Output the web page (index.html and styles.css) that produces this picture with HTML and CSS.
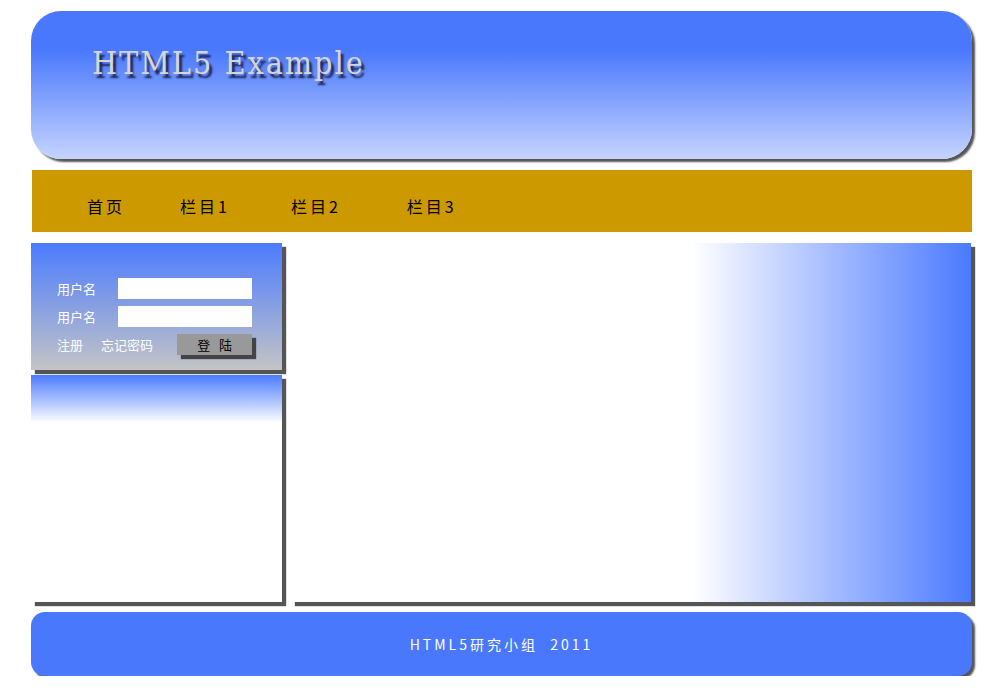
FILE: index.html
```html
<!DOCTYPE html>
<html lang="zh">
<head>
<meta charset="utf-8">
<title>HTML5 Example</title>
<link rel="stylesheet" href="styles.css">
</head>
<body>
<div class="page">
  <header class="header">
    <h1 class="title">HTML5 Example</h1>
  </header>
  <nav class="nav">
    <a class="nav-item">首页</a>
    <a class="nav-item">栏目1</a>
    <a class="nav-item">栏目2</a>
    <a class="nav-item">栏目3</a>
  </nav>
  <div class="content">
    <aside class="side">
      <form class="login">
        <div class="row"><label class="label">用户名</label><input class="field" type="text"></div>
        <div class="row"><label class="label">用户名</label><input class="field" type="password"></div>
        <div class="row links"><span class="link">注册</span><span class="link">忘记密码</span><button class="btn" type="button">登&nbsp;&nbsp;&nbsp;陆</button></div>
      </form>
      <div class="side-box"></div>
    </aside>
    <main class="main"></main>
  </div>
  <footer class="footer">HTML5研究小组&nbsp;&nbsp;2011</footer>
</div>
</body>
</html>
```
FILE: styles.css
```css
html, body {
  margin: 0;
  padding: 0;
  background: #fff;
}
.page {
  width: 941px;
  padding: 11px 0 0 31px;
  font-family: "Noto Sans CJK SC", "Liberation Sans", sans-serif;
}
.header {
  height: 148px;
  border-radius: 30px;
  background: linear-gradient(#4a78fd 26%, #c6d4fe);
  box-shadow: 3px 3px 2px #555;
  display: flex;
  align-items: flex-start;
}
.title {
  margin: 32px 0 0 61px;
  font-family: "DejaVu Serif Condensed", "DejaVu Serif", serif;
  font-stretch: condensed;
  font-weight: normal;
  font-size: 32px;
  letter-spacing: 2px;
  line-height: 40px;
  color: #d6d6d6;
  text-shadow: 3px 4px 2px #1a2550;
}
.nav {
  margin: 11px 0 0 1px;
  height: 62px;
  box-sizing: border-box;
  padding: 9px 0 0 55px;
  background: #cc9900;
  display: flex;
  align-items: center;
}
.nav-item {
  font-family: "Noto Sans CJK SC", serif;
  font-size: 16px;
  letter-spacing: 3px;
  color: #000;
  line-height: 20px;
}
.nav-item:nth-child(2) {
  margin-left: 55px;
}
.nav-item:nth-child(3) {
  margin-left: 61px;
}
.nav-item:nth-child(4) {
  margin-left: 66px;
}
.content {
  margin-top: 11px;
  height: 359px;
  display: flex;
  gap: 9px;
}
.side {
  width: 251px;
  display: flex;
  flex-direction: column;
  gap: 5px;
}
.login {
  margin: 0;
  height: 127px;
  box-sizing: border-box;
  padding: 35px 0 0 26px;
  background: linear-gradient(#4b7bff, #c4c4c6);
  box-shadow: 4px 4px 1px #555;
  display: flex;
  flex-direction: column;
  gap: 7px;
}
.row {
  display: flex;
  align-items: center;
  height: 21px;
}
.label {
  width: 61px;
  font-size: 13px;
  color: #fff;
}
.field {
  width: 134px;
  height: 21px;
  box-sizing: border-box;
  border: 0;
  margin: 0;
  padding: 0 2px;
  background: #fff;
}
.link {
  font-size: 13px;
  color: #fff;
  margin-right: 18px;
  white-space: nowrap;
}
.link + .link {
  margin-right: 24px;
}
.btn {
  width: 75px;
  height: 21px;
  border: 0;
  padding: 0;
  background: #999;
  box-shadow: 4px 4px 1px #444;
  font-family: "Noto Sans CJK SC", sans-serif;
  font-size: 13px;
  color: #000;
}
.side-box {
  flex: 1;
  background: linear-gradient(#4b7bff, #fff 48px);
  box-shadow: 4px 4px 1px #555;
}
.main {
  width: 680px;
  background: linear-gradient(to right, #fff 59%, #4a7aff);
  box-shadow: 4px 4px 1px #555;
}
.footer {
  margin-top: 10px;
  height: 64px;
  border-radius: 14px;
  background: #4a78fd;
  box-shadow: 3px 3px 2px #555;
  display: flex;
  align-items: center;
  justify-content: center;
  color: #fff;
  font-size: 14px;
  letter-spacing: 3px;
}
```
